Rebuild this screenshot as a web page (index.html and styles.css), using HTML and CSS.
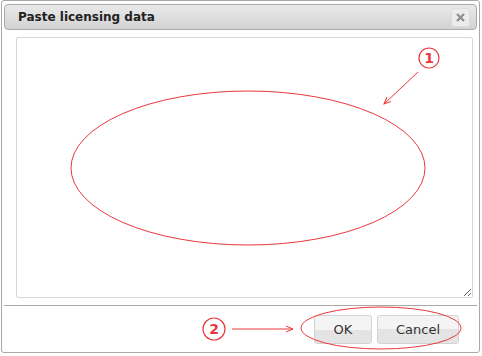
FILE: index.html
```html
<!DOCTYPE html>
<html lang="en">
<head>
    <meta charset="UTF-8">
    <title>Paste licensing data</title>
    <link rel="stylesheet" href="styles.css">
</head>
<body>

<div class="dialog">
    <div class="titlebar">
        <span class="title">Paste licensing data</span>
        <button class="close" title="close">
            <svg width="9" height="9" viewBox="0 0 9 9"><path d="M1,1 L8,8 M8,1 L1,8" stroke="#8c8c8c" stroke-width="2.2"/></svg>
        </button>
    </div>
    <div class="content">
        <textarea class="license-text"></textarea>
    </div>
    <div class="buttonpane">
        <button class="btn btn-ok">OK</button>
        <button class="btn">Cancel</button>
    </div>

    <!-- annotations -->
    <svg class="marks" width="482" height="356" viewBox="0 0 482 356">
        <defs>
            <marker id="head" markerWidth="8" markerHeight="8" refX="7" refY="4" orient="auto" markerUnits="userSpaceOnUse">
                <path d="M0,1 L7,4 L0,7" fill="none" stroke="#e8383d" stroke-width="1"/>
            </marker>
        </defs>
        <ellipse cx="248" cy="168" rx="177" ry="77" fill="none" stroke="#e8383d" stroke-width="1"/>
        <circle cx="429" cy="58" r="10" fill="#fff" stroke="#e8383d" stroke-width="1.2"/>
        <text x="429" y="63" class="num">1</text>
        <line x1="418" y1="72" x2="384" y2="104" stroke="#e8383d" stroke-width="1" marker-end="url(#head)"/>
        <ellipse cx="381" cy="328" rx="80" ry="21" fill="none" stroke="#e8383d" stroke-width="1"/>
        <circle cx="214" cy="329" r="11" fill="#fff" stroke="#e8383d" stroke-width="1.2"/>
        <text x="214" y="334" class="num">2</text>
        <line x1="232" y1="329" x2="293" y2="329" stroke="#e8383d" stroke-width="1" marker-end="url(#head)"/>
    </svg>
</div>

</body>
</html>
```

FILE: styles.css
```css
body {
    margin: 0;
    background: #fff;
    font-family: "DejaVu Sans", Verdana, sans-serif;
}
.dialog {
    position: relative;
    width: 479px;
    height: 353px;
    margin: 0 0 0 1px;
    border: 1px solid #a8a8a8;
    border-radius: 3px;
    background: #fff;
    display: flex;
    flex-direction: column;
    padding: 3px 2px 0 2px;
    box-sizing: border-box;
}
.titlebar {
    height: 26px;
    border: 1px solid #aaa;
    border-radius: 4px;
    background: linear-gradient(#e9e9e9, #d3d3d3);
    display: flex;
    align-items: center;
    justify-content: space-between;
    padding: 0 6px 0 13px;
    box-sizing: border-box;
}
.title {
    font-size: 12px;
    font-weight: bold;
    color: #222;
}
.close {
    width: 19px;
    height: 19px;
    padding: 0;
    border: 1px solid #dcdcdc;
    border-radius: 3px;
    background: #ececec;
    display: flex;
    align-items: center;
    justify-content: center;
}
.content {
    padding: 7px 5px 0 12px;
}
.license-text {
    display: block;
    width: 457px;
    height: 261px;
    border: 1px solid #d6d6e0;
    border-radius: 2px;
    resize: both;
    margin: 0;
    box-sizing: border-box;
}
.buttonpane {
    margin-top: 7px;
    border-top: 1px solid #a8a8a8;
    display: flex;
    justify-content: flex-end;
    gap: 5px;
    padding: 9px 18px 0 0;
}
.btn {
    height: 29px;
    min-width: 58px;
    padding: 0 18px;
    border: 1px solid #d3d3d3;
    border-radius: 3px;
    background: linear-gradient(#f4f4f4 50%, #e4e4e4 50%);
    color: #333;
    font-family: "DejaVu Sans", Verdana, sans-serif;
    font-size: 13px;
}
.btn-ok {
    width: 58px;
    padding: 0;
}
.marks {
    position: absolute;
    left: -2px;
    top: -1px;
    pointer-events: none;
}
.num {
    fill: #e8383d;
    font-family: "DejaVu Sans", sans-serif;
    font-weight: bold;
    font-size: 14px;
    text-anchor: middle;
}
```
